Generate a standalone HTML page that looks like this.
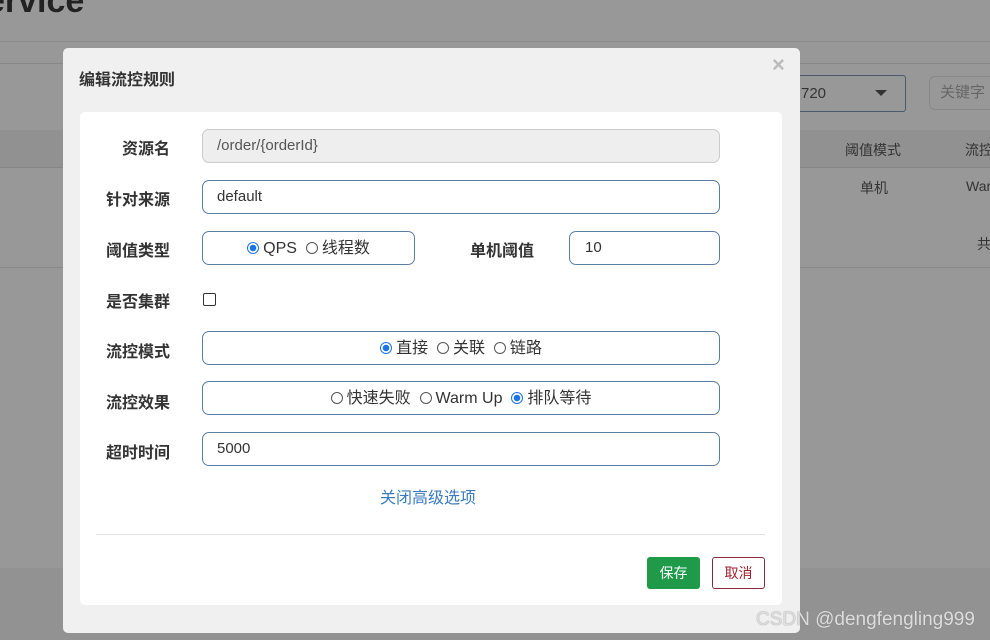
<!DOCTYPE html>
<html><head><meta charset="utf-8"><style>
body{margin:0;width:990px;height:640px;background:#989898;position:relative;overflow:hidden;font-family:"Liberation Sans","Noto Sans CJK SC",sans-serif;}
.a{position:absolute;white-space:nowrap}
.lbl{position:absolute;width:90px;text-align:right;left:80px;font-size:16px;font-weight:bold;color:#333}
.inp{position:absolute;left:202px;width:518px;height:34px;border:1px solid #5a7fa0;border-radius:7px;background:#fff;font-size:15px;color:#333;box-sizing:border-box;line-height:32px;padding-left:14px;white-space:nowrap}
.r{display:inline-block;width:12px;height:12px;border:1px solid #555;border-radius:50%;vertical-align:-1px;margin-right:4px;box-sizing:border-box;background:#fff}
.r.on{border:1px solid #1a73e8;background:radial-gradient(circle,#1a73e8 3px,#fff 3.5px)}
.c{text-align:center;padding:0;font-size:16px;line-height:34px}
</style></head><body>
<div class="a" style="left:-14px;top:-18px;font-size:34px;font-weight:bold;color:#222">ervice</div>
<div class="a" style="left:0;top:41px;width:990px;height:1px;background:#8a8a8a"></div>
<div class="a" style="left:0;top:63px;width:990px;height:1px;background:#888"></div>
<div class="a" style="left:0;top:130px;width:990px;height:37px;background:#919191;border-bottom:1px solid #858585"></div>
<div class="a" style="left:0;top:267px;width:990px;height:1px;background:#888"></div>
<div class="a" style="left:780px;top:75px;width:126px;height:37px;border:1px solid #4a5a6a;border-radius:3px;box-sizing:border-box;font-size:15px;color:#333;line-height:35px;padding-left:20px">720<span style="position:absolute;right:18px;top:14px;border-left:6px solid transparent;border-right:6px solid transparent;border-top:6px solid #333"></span></div>
<div class="a" style="left:929px;top:76px;width:70px;height:32px;border:1px solid #888;border-radius:6px;font-size:15px;color:#666;line-height:32px;padding-left:10px">关键字</div>
<div class="a" style="left:845px;top:140px;font-size:14px;color:#333">阈值模式</div>
<div class="a" style="left:965px;top:140px;font-size:14px;color:#333">流控</div>
<div class="a" style="left:860px;top:178px;font-size:14px;color:#333">单机</div>
<div class="a" style="left:966px;top:178px;font-size:14px;color:#333">War</div>
<div class="a" style="left:977px;top:234px;font-size:14px;color:#333">共</div>
<div class="a" style="left:0;top:568px;width:990px;height:72px;background:#929292"></div>

<div class="a" style="left:63px;top:48px;width:737px;height:585px;background:#f0f0f0;border-radius:5px"></div>
<div class="a" style="left:79px;top:66px;font-size:16px;font-weight:bold;color:#333">编辑流控规则</div>
<div class="a" style="left:772px;top:52px;font-size:22px;color:#bbb;font-weight:bold">×</div>
<div class="a" style="left:80px;top:112px;width:702px;height:493px;background:#fff;border-radius:5px"></div>

<div class="lbl" style="top:135px">资源名</div>
<div class="inp" style="top:129px;background:#eee;border-color:#ccc;color:#555">/order/{orderId}</div>
<div class="lbl" style="top:186px">针对来源</div>
<div class="inp" style="top:180px">default</div>
<div class="lbl" style="top:237px">阈值类型</div>
<div class="inp c" style="top:231px;width:213px"><span class="r on"></span>QPS &nbsp;<span class="r"></span>线程数</div>
<div class="a" style="left:470px;top:237px;font-size:16px;font-weight:bold;color:#333">单机阈值</div>
<div class="inp" style="top:231px;left:569px;width:151px;padding-left:15px">10</div>
<div class="lbl" style="top:288px">是否集群</div>
<div class="a" style="left:203px;top:293px;width:11px;height:11px;border:1px solid #333;border-radius:2px"></div>
<div class="lbl" style="top:338px">流控模式</div>
<div class="inp c" style="top:331px"><span class="r on"></span>直接 &nbsp;<span class="r"></span>关联 &nbsp;<span class="r"></span>链路</div>
<div class="lbl" style="top:389px">流控效果</div>
<div class="inp c" style="top:381px"><span class="r"></span>快速失败 &nbsp;<span class="r"></span>Warm Up &nbsp;<span class="r on"></span>排队等待</div>
<div class="lbl" style="top:439px">超时时间</div>
<div class="inp" style="top:432px">5000</div>
<div class="a" style="left:380px;top:484px;font-size:16px;color:#3a7bbf">关闭高级选项</div>
<div class="a" style="left:96px;top:534px;width:669px;height:1px;background:#e2e2e2"></div>
<div class="a" style="left:647px;top:557px;width:53px;height:32px;background:#1e9a48;border-radius:3px;color:#fff;font-size:14px;text-align:center;line-height:32px">保存</div>
<div class="a" style="left:712px;top:557px;width:53px;height:32px;border:1px solid #8a2a3a;box-sizing:border-box;border-radius:3px;color:#a02030;font-size:14px;text-align:center;line-height:30px;background:#fff">取消</div>
<div class="a" style="left:756px;top:609px;font-size:19px;color:#ddd;text-shadow:0 0 1px #777">CSDN @dengfengling999</div>
</body></html>
